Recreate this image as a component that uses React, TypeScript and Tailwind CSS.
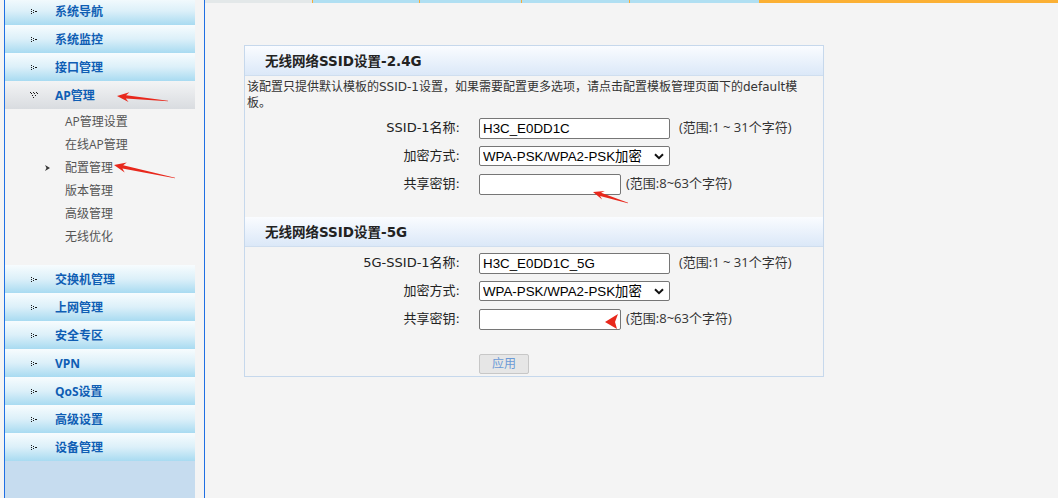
import React from "react";

const topItems = ["系统导航", "系统监控", "接口管理"];
const subItems = ["AP管理设置", "在线AP管理", "配置管理", "版本管理", "高级管理", "无线优化"];
const bottomItems = ["交换机管理", "上网管理", "安全专区", "VPN", "QoS设置", "高级设置", "设备管理"];

// little dotted glyphs used by the old router menu
const rightDots = [[1, 0], [3, 1], [1, 2], [3, 3], [1, 4], [5, 2], [6, 2]];
const downDots = [[0, 0], [3, 0], [6, 0], [1, 1], [4, 1], [7, 1], [2, 3], [5, 3], [3, 5]];

function Dots({ dots, w, h }: { dots: number[][]; w: number; h: number }) {
  return (
    <svg width={w} height={h} viewBox={`0 0 ${w} ${h}`} className="shrink-0">
      {dots.map(([x, y], i) => (
        <rect key={i} x={x} y={y} width="1" height="1" fill="#1b1b1b" />
      ))}
    </svg>
  );
}

function MenuItem({ label }: { label: string }) {
  return (
    <div className="flex h-[28px] shrink-0 items-center bg-linear-to-b from-[#f7fcfe] via-[#dcf0f9] to-[#a8dbf1] pl-[25px]">
      <Dots dots={rightDots} w={8} h={5} />
      <span className="ml-[17px] pt-[2px] text-[12px] font-bold text-[#0f5eb4]">{label}</span>
    </div>
  );
}

function Sidebar() {
  return (
    <aside className="ml-[4px] flex w-[201px] shrink-0 border-x border-[#1f6fe3] bg-[#f4f4f4] font-['Open_Sans','Noto_Sans_CJK_SC',sans-serif]">
      <div className="-mt-[3px] flex w-[190px] flex-col">
        {topItems.map(t => <MenuItem key={t} label={t} />)}
        <div className="flex h-[28px] shrink-0 items-center bg-linear-to-b from-[#f3f4f5] to-[#d9dce0] pl-[25px]">
          <Dots dots={downDots} w={8} h={6} />
          <span className="ml-[17px] pt-[2px] text-[12px] font-bold text-[#0f5eb4]">AP管理</span>
        </div>
        {subItems.map(t => (
          <div key={t} className="flex h-[23px] shrink-0 items-center pl-[40px] pt-[2px] text-[12px] text-[#555]">
            <span className="flex w-[20px] items-center">
              {t === "配置管理" && (
                <svg width="6" height="6" viewBox="0 0 6 6">
                  <path d="M0 0L5 3L0 6L1.5 3Z" fill="#333" />
                </svg>
              )}
            </span>
            {t}
          </div>
        ))}
        <div className="mt-[18px] flex flex-col">
          {bottomItems.map(t => <MenuItem key={t} label={t} />)}
        </div>
        <div className="flex-1 bg-[#c6dcef]" />
      </div>
    </aside>
  );
}

function TextInput({ value, w }: { value: string; w: string }) {
  return (
    <input
      readOnly
      value={value}
      className={`h-[21px] ${w} rounded-[2px] border border-[#767676] bg-white px-[3px] font-['Liberation_Sans','Noto_Sans_CJK_SC',sans-serif] text-[13.33px] text-black outline-none`}
    />
  );
}

function Select() {
  return (
    <div className="relative h-[20px] w-[191px]">
      <select
        defaultValue="wpa"
        className="h-full w-full appearance-none rounded-[2px] border border-[#767676] bg-white pl-[3px] font-['Liberation_Sans','Noto_Sans_CJK_SC',sans-serif] text-[13.33px] text-black outline-none"
      >
        <option value="wpa">WPA-PSK/WPA2-PSK加密</option>
      </select>
      <svg className="pointer-events-none absolute right-[6px] top-[7px]" width="10" height="7" viewBox="0 0 10 7">
        <path d="M1 1.2L5 5.2L9 1.2" fill="none" stroke="#111" strokeWidth="2" />
      </svg>
    </div>
  );
}

function Row({ label, children }: { label: string; children: React.ReactNode }) {
  return (
    <div className="flex h-[28px] items-center">
      <span className="w-[215px] text-right font-['DejaVu_Sans','Noto_Sans_CJK_SC',sans-serif] text-[13px] text-[#222]">{label}</span>
      <div className="ml-[19px] flex items-center text-[13px] text-[#333]">{children}</div>
    </div>
  );
}

function Section({ title, name, ssid, first }: { title: string; name: string; ssid: string; first?: boolean }) {
  return (
    <>
      <div className="flex h-[30px] items-center border-b border-[#cfdeef] bg-linear-to-b from-[#fafcff] to-[#dbe8f8] pl-[20px] pt-[1px] font-['DejaVu_Sans','Noto_Sans_CJK_SC',sans-serif] text-[13.5px] font-bold text-[#222]">
        {title}
      </div>
      {first && (
        <p className="whitespace-nowrap pl-[2px] pt-[3px] font-['DejaVu_Sans','Noto_Sans_CJK_SC',sans-serif] text-[12px] leading-[16px] text-[#333]">
          该配置只提供默认模板的SSID-1设置，如果需要配置更多选项，请点击配置模板管理页面下的default模
          <br />
          板。
        </p>
      )}
      <div className={first ? "mt-[3px]" : "mt-[2px]"}>
        <Row label={name}>
          <TextInput value={ssid} w="w-[191px]" />
          <span className="ml-[9px]">(范围:1 ~ 31个字符)</span>
        </Row>
        <Row label="加密方式:">
          <Select />
        </Row>
        <Row label="共享密钥:">
          <TextInput value="" w="w-[142px]" />
          <span className="ml-[5px]">(范围:8~63个字符)</span>
        </Row>
      </div>
    </>
  );
}

function arrow(tx: number, ty: number, ex: number, ey: number, head = 12, hw = 5) {
  const dx = ex - tx, dy = ey - ty;
  const len = Math.hypot(dx, dy);
  const ux = dx / len, uy = dy / len, nx = -uy, ny = ux;
  const p = (a: number, b: number) => `${(tx + ux * a + nx * b).toFixed(1)},${(ty + uy * a + ny * b).toFixed(1)}`;
  return [p(0, 0), p(head, hw), p(head - 3, 1.7), p(len, 0.3), p(len, -0.3), p(head - 3, -1.7), p(head, -hw)].join(" ");
}

export default function App() {
  return (
    <div className="relative flex h-[498px] w-[1058px] overflow-hidden bg-[#f4f4f4] font-['Open_Sans','Noto_Sans_CJK_SC',sans-serif]">
      <Sidebar />
      <main className="flex flex-1 flex-col">
        <div className="flex h-[3px] shrink-0">
          <div className="w-[107px] bg-[#e3e8e9]" />
          <div className="w-px bg-[#f5ad3b]" />
          <div className="w-[106px] bg-[#b0dff2]" />
          <div className="w-px bg-[#f5ad3b]" />
          <div className="w-[101px] bg-[#b0dff2]" />
          <div className="w-px bg-[#f5ad3b]" />
          <div className="w-[107px] bg-[#b0dff2]" />
          <div className="w-px bg-[#f5ad3b]" />
          <div className="w-[129px] bg-[#b0dff2]" />
          <div className="flex-1 bg-[#fbb034]" />
        </div>
        <div className="ml-[39px] mt-[42px] flex h-[332px] w-[580px] flex-col border border-[#c6d8ec]">
          <Section first title="无线网络SSID设置-2.4G" name="SSID-1名称:" ssid="H3C_E0DD1C" />
          <div className="mt-[19px]">
            <Section title="无线网络SSID设置-5G" name="5G-SSID-1名称:" ssid="H3C_E0DD1C_5G" />
          </div>
          <button className="ml-[234px] mt-[21px] h-[20px] w-[50px] rounded-[2px] border border-[#c7c7c7] bg-[#e6e6e6] text-[12px] text-[#6b9ad6]">
            应用
          </button>
        </div>
      </main>
      <svg className="pointer-events-none absolute inset-0" width="1058" height="498">
        <polygon points={arrow(117, 96, 168, 101)} fill="#e8281c" />
        <polygon points={arrow(114, 165, 175, 178)} fill="#e8281c" />
        <polygon points={arrow(593, 192, 628, 203, 11, 4.5)} fill="#e8281c" />
        <polygon points="605,322 618,314 615,322 617,329" fill="#e8281c" />
      </svg>
    </div>
  );
}
